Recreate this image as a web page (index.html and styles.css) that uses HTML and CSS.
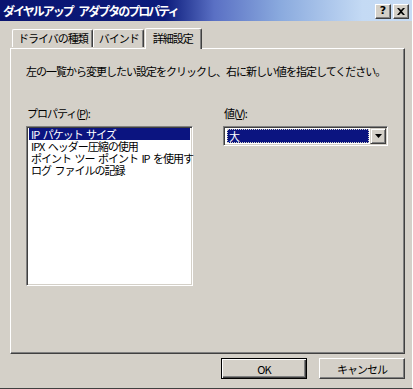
FILE: index.html
```html
<!DOCTYPE html>
<html lang="ja">
  <head>
    <meta charset="UTF-8" />
    <meta name="viewport" content="width=device-width, initial-scale=1.0" />
    <title>ダイヤルアップ アダプタのプロパティ</title>
    <link rel="stylesheet" href="styles.css">
  </head>
  <body>
    <div class="window">
      <div class="titlebar">
        <span class="title">ダイヤルアップ アダプタのプロパティ</span>
        <div class="caption-buttons">
          <button class="caption-btn">?</button>
          <button class="caption-btn">
            <svg width="8" height="7" viewBox="0 0 8 7">
              <path d="M0 0h2l2 2 2-2h2L5 3.5 8 7H6L4 5 2 7H0l3-3.5z" fill="#000" />
            </svg>
          </button>
        </div>
      </div>

      <div class="content">
        <div class="tabs">
          <div class="tab">ドライバの種類</div>
          <div class="tab">バインド</div>
          <div class="tab active">詳細設定</div>
        </div>

        <div class="panel">
          <p class="hint">左の一覧から変更したい設定をクリックし、右に新しい値を指定してください。</p>

          <div class="fields">
            <div class="field prop">
              <label>プロパティ(<u>P</u>):</label>
              <ul class="listbox">
                <li class="selected">IP パケット サイズ</li>
                <li>IPX ヘッダー圧縮の使用</li>
                <li>ポイント ツー ポイント IP を使用す</li>
                <li>ログ ファイルの記録</li>
              </ul>
            </div>

            <div class="field value">
              <label>値(<u>V</u>):</label>
              <div class="combo">
                <span class="combo-value"><span class="combo-focus">大</span></span>
                <span class="combo-btn">
                  <svg width="7" height="4" viewBox="0 0 7 4">
                    <path d="M0 0h7L3.5 4z" fill="#000" />
                  </svg>
                </span>
              </div>
            </div>
          </div>
        </div>

        <div class="actions">
          <button class="btn default">OK</button>
          <button class="btn">キャンセル</button>
        </div>
      </div>
    </div>
  </body>
</html>
```

FILE: styles.css
```css
* {
  box-sizing: border-box;
}

body {
  margin: 0;
  background-color: #d4d0c8;
  font-family: "Noto Sans CJK JP", "Noto Sans", sans-serif;
  font-size: 11px;
  letter-spacing: -1px;
  word-spacing: 3px;
  color: #000;
}

.window {
  width: 413px;
  height: 389px;
  background-color: #d4d0c8;
  border-right: 1px solid #fff;
  border-bottom: 1px solid #404040;
  display: flex;
  flex-direction: column;
}

/* Title bar */
.titlebar {
  height: 21px;
  display: flex;
  align-items: center;
  justify-content: space-between;
  padding: 0 3px 0 3px;
  background: linear-gradient(90deg, #0a1470 0%, #0c1c7c 40%, #5a70c4 52%, #8aaade 68%, #c4daf4 88%, #c8dcf4 100%);
}

.title {
  color: #fff;
  font-weight: bold;
  font-size: 12px;
  letter-spacing: -2px;
  word-spacing: 5px;
  line-height: 21px;
}

.caption-buttons {
  display: flex;
  gap: 2px;
  margin-top: 1px;
}

.caption-btn {
  width: 16px;
  height: 15px;
  padding: 0;
  margin: 0;
  background-color: #d4d0c8;
  border: 1px solid;
  border-color: #fff #404040 #404040 #fff;
  box-shadow: inset -1px -1px 0 #808080;
  font-family: "DejaVu Sans", sans-serif;
  font-weight: bold;
  font-size: 11px;
  line-height: 12px;
  display: flex;
  align-items: center;
  justify-content: center;
  letter-spacing: 0;
}

/* Body */
.content {
  flex: 1;
  display: flex;
  flex-direction: column;
  padding: 7px 7px 0 10px;
}

.tabs {
  display: flex;
  align-items: flex-end;
  padding-left: 2px;
  height: 20px;
  position: relative;
  z-index: 1;
}

.tab {
  height: 18px;
  padding: 0 4px 0 5px;
  line-height: 17px;
  border-top: 1px solid #fff;
  border-left: 1px solid #fff;
  border-right: 1px solid #404040;
  box-shadow: inset -1px 0 0 #808080;
  border-radius: 2px 2px 0 0;
  margin-bottom: 1px;
}

.tab.active {
  height: 21px;
  margin: 0 -1px -1px 1px;
  padding: 1px 8px 0 7px;
  line-height: 17px;
  background-color: #d4d0c8;
}

.panel {
  height: 306px;
  border: 1px solid;
  border-color: #fff #404040 #404040 #fff;
  box-shadow: inset -1px -1px 0 #808080;
  padding: 0 15px;
}

.hint {
  margin: 16px 0 0 0;
  line-height: 12px;
}

.fields {
  display: flex;
  gap: 30px;
  margin-top: 30px;
}

.field {
  display: flex;
  flex-direction: column;
}

.field label {
  line-height: 12px;
  margin-bottom: 7px;
  padding-left: 1px;
}

.field.prop {
  width: 167px;
}

.field.value {
  width: 165px;
}

.listbox {
  list-style: none;
  margin: 0;
  height: 160px;
  background-color: #fff;
  border: 1px solid;
  border-color: #808080 #fff #fff #808080;
  box-shadow: inset 1px 1px 0 #404040, inset -1px -1px 0 #d4d0c8;
  padding: 1px 2px 0 2px;
  word-spacing: 2px;
}

.listbox li {
  line-height: 12px;
  height: 12px;
  padding-left: 2px;
  white-space: nowrap;
}

.listbox li.selected {
  background-color: #0b1480;
  color: #fff;
}

.combo {
  height: 20px;
  display: flex;
  background-color: #fff;
  border: 1px solid;
  border-color: #808080 #fff #fff #808080;
  box-shadow: inset 1px 1px 0 #404040, inset -1px -1px 0 #d4d0c8;
  padding: 2px;
}

.combo-value {
  flex: 1;
  padding: 0 1px 0 1px;
}

.combo-focus {
  display: block;
  height: 100%;
  background-color: #0b1480;
  color: #fff;
  outline: 1px dotted #d4d0c8;
  outline-offset: -1px;
  padding-left: 2px;
  line-height: 14px;
}

.combo-btn {
  width: 16px;
  height: 16px;
  margin: -1px -1px 0 0;
  background-color: #d4d0c8;
  border: 1px solid;
  border-color: #d4d0c8 #404040 #404040 #d4d0c8;
  box-shadow: inset 1px 1px 0 #fff, inset -1px -1px 0 #808080;
  display: flex;
  align-items: center;
  justify-content: center;
}

/* Dialog buttons */
.actions {
  display: flex;
  justify-content: flex-end;
  gap: 12px;
  margin-top: 4px;
}

.btn {
  width: 86px;
  height: 21px;
  padding: 0;
  background-color: #d4d0c8;
  border: 1px solid;
  border-color: #fff #404040 #404040 #fff;
  box-shadow: inset -1px -1px 0 #808080;
  font-family: inherit;
  font-size: 11px;
  letter-spacing: -1px;
  line-height: 18px;
  color: #000;
}

.btn.default {
  border: 1px solid #000;
  box-shadow: inset 1px 1px 0 #fff, inset -1px -1px 0 #404040, inset -2px -2px 0 #808080;
}
```
